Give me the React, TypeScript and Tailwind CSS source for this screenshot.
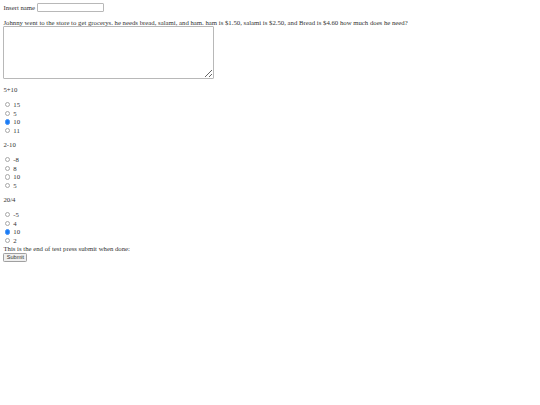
import React from "react";

const questions = [
  { q: "5+10", name: "q1", opts: ["15", "5", "10", "11"], checked: 2 },
  { q: "2-10", name: "q2", opts: ["-8", "8", "10", "5"], checked: -1 },
  { q: "20/4", name: "q3", opts: ["-5", "4", "10", "2"], checked: 2 },
];

export default function App() {
  return (
    <div className="min-h-[405px] bg-white p-[3.4px] font-['Liberation_Serif',serif] text-[6.75px] leading-[normal] text-[#333]">
      <div className="flex items-center gap-[1.7px]">
        <span>Insert name</span>
        <input
          type="text"
          className="h-[9px] w-[67px] rounded-[1px] border border-[#b8b8b8] bg-white"
        />
      </div>
      <p className="mt-[6.3px]">
        Johnny went to the store to get grocerys. he needs bread, salami, and ham. ham is $1.50, salami is $2.50, and Bread is $4.60 how much does he need?
      </p>
      <textarea className="block h-[53.5px] w-[211px] resize rounded-[1px] border border-[#b8b8b8] bg-white" />
      {questions.map((qq, qi) => (
        <div key={qq.name} className={qi === 0 ? "mt-[7.3px]" : "mt-[6.6px]"}>
          <p className="leading-[7.8px]">{qq.q}</p>
          <div className="mt-[6.2px]">
            {qq.opts.map((o, i) => (
              <label key={o + i} className="flex h-[8.6px] items-center">
                <input
                  type="radio"
                  name={qq.name}
                  defaultChecked={i === qq.checked}
                  className="ml-[1.6px] mr-[1.3px] h-[5.4px] w-[5.4px] appearance-none rounded-full border-[0.5px] border-[#a8a8a8] bg-white checked:border-[#3d8ef7] checked:bg-[#1a7cf5]"
                />
                <span className="ml-[1.7px]">{o}</span>
              </label>
            ))}
          </div>
        </div>
      ))}
      <p className="mt-[0.3px] leading-[7.8px]">This is the end of test press submit when done:</p>
      <button className="flex h-[9px] items-center rounded-[1.3px] border border-[#a0a0a0] bg-[#efefef] px-[2.3px] font-['Liberation_Sans',sans-serif] text-[5.6px] leading-none text-[#333]">
        Submit
      </button>
    </div>
  );
}
